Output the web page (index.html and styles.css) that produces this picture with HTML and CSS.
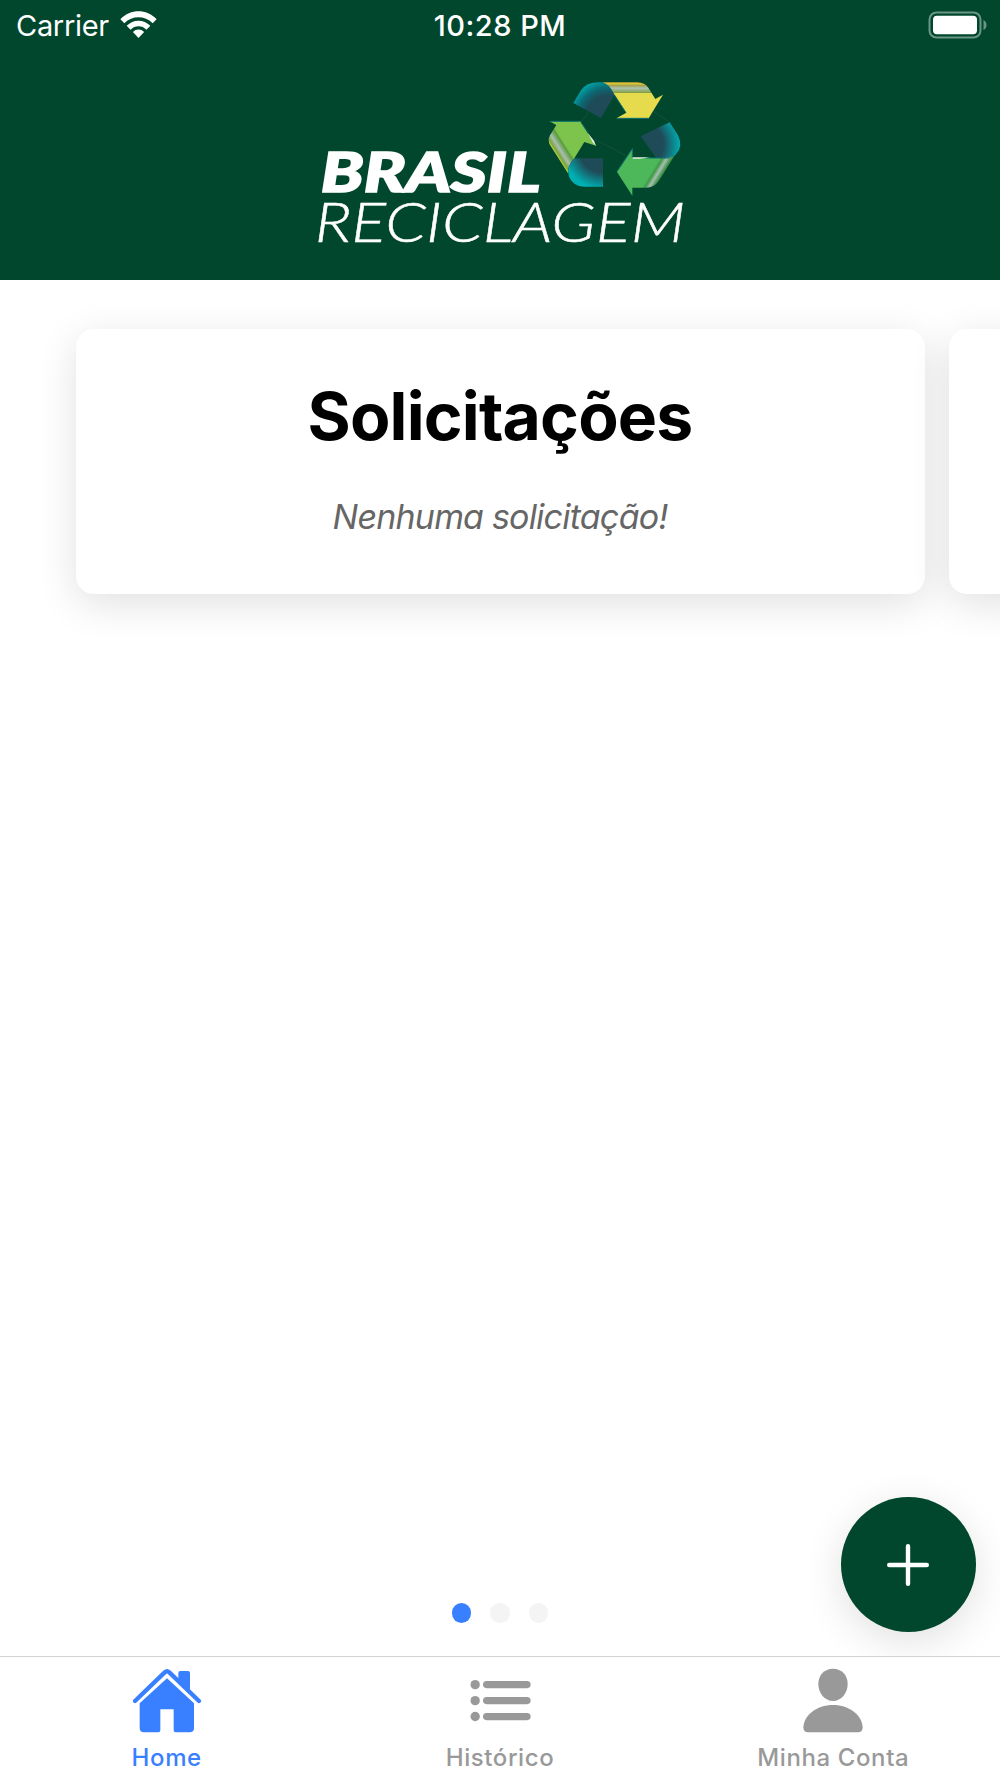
FILE: index.html
```html
<!DOCTYPE html>
<html lang="pt-BR">
<head>
    <meta charset="UTF-8">
    <meta name="viewport" content="width=device-width, initial-scale=1.0">
    <title>Brasil Reciclagem</title>
    <link rel="stylesheet" href="styles.css">
</head>
<body>
    <header>
        <div class="status-bar">
            <div class="carrier">
                <span>Carrier</span>
                <svg class="wifi" viewBox="0 0 110 82">
                    <path d="M0 25C31-7 79-7 110 25L98 37C74 13 36 13 12 37Z"/>
                    <path d="M19 45C39 24 71 24 91 45L79 57C66 43 44 43 31 57Z"/>
                    <path d="M38 64C47 54 63 54 72 64L55 82Z"/>
                </svg>
            </div>
            <span class="clock">10:28 PM</span>
            <svg class="battery" viewBox="0 0 59 28">
                <rect class="battery-case" x="1.5" y="1.5" width="51" height="25" rx="7"/>
                <rect x="5" y="4.700" width="44" height="18.600" rx="4"/>
                <path class="battery-tip" d="M55.500 9Q58.500 10.500 58.500 14Q58.500 17.500 55.500 19Z"/>
            </svg>
        </div>

        <!-- Logo -->
        <svg class="logo" viewBox="0 0 1200 570">
            <defs>
                <radialGradient id="fold-top" gradientUnits="userSpaceOnUse" cx="925" cy="145" r="122">
                    <stop offset="0.550" stop-color="#1f4a57"/>
                    <stop offset="0.750" stop-color="#0b6872"/>
                    <stop offset="1" stop-color="#00a9ad"/>
                </radialGradient>
                <radialGradient id="fold-right" gradientUnits="userSpaceOnUse" cx="1018" cy="225" r="124">
                    <stop offset="0.580" stop-color="#1f4a57"/>
                    <stop offset="1" stop-color="#00afb2"/>
                </radialGradient>
                <radialGradient id="fold-left" gradientUnits="userSpaceOnUse" cx="910" cy="235" r="122">
                    <stop offset="0.600" stop-color="#1f4a57"/>
                    <stop offset="1" stop-color="#00afb2"/>
                </radialGradient>
                <linearGradient id="yellow" gradientUnits="userSpaceOnUse" x1="0" y1="36" x2="0" y2="70">
                    <stop offset="0" stop-color="#c9a52b"/>
                    <stop offset="0.150" stop-color="#e3c63b"/>
                    <stop offset="0.300" stop-color="#a4a24b"/>
                    <stop offset="0.550" stop-color="#acc2b0"/>
                    <stop offset="0.950" stop-color="#859f42"/>
                    <stop offset="0.960" stop-color="#e6da4d"/>
                </linearGradient>
                <linearGradient id="lime" gradientUnits="userSpaceOnUse" x1="773" y1="260" x2="806" y2="239">
                    <stop offset="0" stop-color="#b3d33b"/>
                    <stop offset="0.150" stop-color="#7da43e"/>
                    <stop offset="0.450" stop-color="#a8bfb0"/>
                    <stop offset="0.850" stop-color="#5b9b3d"/>
                    <stop offset="1" stop-color="#7dc44c"/>
                </linearGradient>
                <linearGradient id="green" gradientUnits="userSpaceOnUse" x1="1064" y1="290" x2="1095" y2="309">
                    <stop offset="0" stop-color="#4db85a"/>
                    <stop offset="0.200" stop-color="#3f9947"/>
                    <stop offset="0.500" stop-color="#a6bfb0"/>
                    <stop offset="0.850" stop-color="#3b8f44"/>
                    <stop offset="1" stop-color="#65bd55"/>
                </linearGradient>
            </defs>
            <path class="thin-line" d="M866 125L842 158M885 208L980 258M1060 123L1110 158"/>
            <path fill="url(#fold-top)" d="M820 99L843 61Q860 37 895 37H912Q934 44 943 76L903 144Z"/>
            <path fill="url(#yellow)" d="M909 37H1012Q1034 38 1045 53L1066 87L1089 74L1046 145H949L979 128L941 70Q930 45 909 37Z"/>
            <path class="edge" d="M943 75L977 127M951 145H1045"/>
            <path fill="url(#fold-right)" d="M1022 199L1109 157L1134 196Q1150 230 1128 253Q1117 266 1098 264H1069Z"/>
            <path fill="url(#green)" d="M951 306L998 235V264H1092Q1117 264 1124 256L1076 333Q1063 353 1038 353H997V377Z"/>
            <path class="edge" d="M951 304L997 236V262M1040 264H1108"/>
            <path class="shine" d="M998 262H1050L1020 266H998Z"/>
            <path fill="url(#fold-left)" d="M823 265H909V350H851Q820 349 807 320Q797 294 823 265Z"/>
            <path fill="url(#lime)" d="M748 154H841L878 211L888 227L853 216L823 265Q802 286 804 310L750 225Q742 211 750 196L769 165Z"/>
            <path class="edge" d="M841 154L866 192M751 154H838"/>
            <path class="shine" d="M864 190L882 212L888 228L878 217Z"/>
            <text class="logo-bold" x="62" y="366" textLength="660" lengthAdjust="spacingAndGlyphs">BRASIL</text>
            <text class="logo-light" x="44" y="517" textLength="1112" lengthAdjust="spacingAndGlyphs">RECICLAGEM</text>
        </svg>
    </header>

    <main>
        <section class="slides">
            <article class="card">
                <h1>Solicitações</h1>
                <p>Nenhuma solicitação!</p>
            </article>
            <article class="card"></article>
        </section>

        <div class="pager">
            <span class="dot active"></span>
            <span class="dot"></span>
            <span class="dot"></span>
        </div>

        <button class="fab" aria-label="Nova solicitação">
            <svg viewBox="0 0 42 42"><path d="M21 2.200V39.800M2.200 21H39.800"/></svg>
        </button>
    </main>

    <nav>
        <a class="tab active">
            <svg viewBox="0 0 216 216">
                <path class="roof" d="M12 111L101 25Q108 19 115 25L204 111"/>
                <path d="M142 48V27Q142 21 148 21H171Q177 21 177 27V84Z"/>
                <path d="M108 43L189 118V192Q189 205 176 205H134Q128 205 128 199V136H88V199Q88 205 82 205H39Q26 205 26 192V118Z"/>
            </svg>
            <span>Home</span>
        </a>
        <a class="tab">
            <svg viewBox="0 0 216 216">
                <circle cx="33.500" cy="62" r="14"/>
                <circle cx="33.500" cy="110" r="14"/>
                <circle cx="33.500" cy="157.500" r="14"/>
                <rect x="57" y="51" width="143" height="21.500" rx="10.700"/>
                <rect x="57" y="99" width="143" height="21.500" rx="10.700"/>
                <rect x="57" y="147" width="143" height="21.500" rx="10.700"/>
            </svg>
            <span>Histórico</span>
        </a>
        <a class="tab">
            <svg viewBox="0 0 216 216">
                <path d="M108 14C134 14 152 33 152 60C152 87 133 111 108 111S64 87 64 60C64 33 82 14 108 14Z"/>
                <path d="M19 190C21 154 58 123 108 123S195 154 197 190Q197 205 183 205H33Q19 205 19 190Z"/>
            </svg>
            <span>Minha Conta</span>
        </a>
    </nav>
</body>
</html>
```
FILE: styles.css
```css
* {
    margin: 0;
    padding: 0;
    box-sizing: border-box;
}

body {
    font-family: 'Inter', sans-serif;
    background-color: #fff;
    display: flex;
    flex-direction: column;
    height: 1778px;
    overflow: hidden;
}

svg {
    display: block;
    flex: none;
}

header {
    height: 280px;
    flex: none;
    background-color: #00472d;
    color: #fff;
}

/* Status bar */
.status-bar {
    height: 50px;
    padding: 1px 13px 0 16px;
    display: grid;
    grid-template-columns: 1fr auto 1fr;
    align-items: center;
    font-size: 29px;
    line-height: 50px;
}

.status-bar svg {
    fill: #fff;
}

.carrier {
    display: flex;
    align-items: center;
    gap: 11.5px;
    letter-spacing: -0.3px;
}

.wifi {
    width: 37px;
    height: 27px;
    margin-top: -4px;
}

.clock {
    font-weight: 500;
    letter-spacing: 0.5px;
    margin-right: 3px;
}

.battery {
    width: 59px;
    height: 28px;
    margin-top: -2px;
    justify-self: end;
}

.status-bar .battery-case {
    fill: none;
    stroke: #6b9584;
    stroke-width: 2;
}

.status-bar .battery-tip {
    fill: #6b9584;
}

.logo {
    width: 400px;
    height: 190px;
    margin: 20px auto 0;
}

.logo text {
    font-family: 'Lato', sans-serif;
    font-style: italic;
    fill: #fff;
    stroke: #fff;
}

.logo .logo-bold {
    font-size: 168px;
    font-weight: 900;
    stroke-width: 5;
}

.logo .logo-light {
    font-size: 168px;
    font-weight: 300;
    stroke-width: 1.5;
}

.thin-line {
    stroke: #1c5640;
    stroke-width: 2;
}

.edge {
    fill: none;
    stroke: #087071;
    stroke-width: 3;
}

.shine {
    fill: #e5efe9;
}

/* Slides */
main {
    flex: 1;
    position: relative;
    display: flex;
    flex-direction: column;
    justify-content: space-between;
    overflow: hidden;
}

.slides {
    display: flex;
    gap: 24px;
    padding: 48.5px 0 0 75.5px;
}

.card {
    width: 849px;
    height: 265.5px;
    flex: none;
    padding-top: 47px;
    border-radius: 18px;
    background-color: #fff;
    box-shadow: 0 10px 40px rgba(0, 0, 0, 0.12);
    text-align: center;
}

.card h1 {
    font-size: 66px;
    font-weight: 700;
    line-height: 80px;
    letter-spacing: -0.8px;
}

.card p {
    margin-top: 40px;
    font-size: 34px;
    font-style: italic;
    line-height: 42px;
    letter-spacing: -0.8px;
    color: #666;
}

.pager {
    display: flex;
    justify-content: center;
    gap: 19.4px;
    padding-bottom: 33.5px;
}

.dot {
    width: 19.3px;
    height: 19.3px;
    border-radius: 50%;
    background-color: #f4f4f4;
}

.dot.active {
    background-color: #3880ff;
}

.fab {
    position: absolute;
    right: 24.5px;
    bottom: 24px;
    width: 135px;
    height: 135px;
    display: flex;
    align-items: center;
    justify-content: center;
    border: none;
    border-radius: 50%;
    background-color: #00472d;
    box-shadow: 0 10px 40px rgba(0, 0, 0, 0.12);
}

.fab svg {
    width: 42px;
    height: 42px;
    stroke: #fff;
    stroke-width: 4.4;
    stroke-linecap: round;
}

/* Tabs */
nav {
    height: 122px;
    flex: none;
    display: flex;
    border-top: 1px solid #d3d3d3;
    padding-top: 7px;
}

.tab {
    flex: 1;
    display: flex;
    flex-direction: column;
    align-items: center;
    font-size: 24px;
    font-weight: 450;
    line-height: 30px;
    letter-spacing: 0.6px;
    color: #999;
}

.tab.active {
    color: #3880ff;
}

.tab svg {
    width: 72px;
    height: 72px;
    fill: currentColor;
}

.tab span {
    margin-top: 7px;
}

.roof {
    fill: none;
    stroke: currentColor;
    stroke-width: 13;
    stroke-linecap: round;
}
```
